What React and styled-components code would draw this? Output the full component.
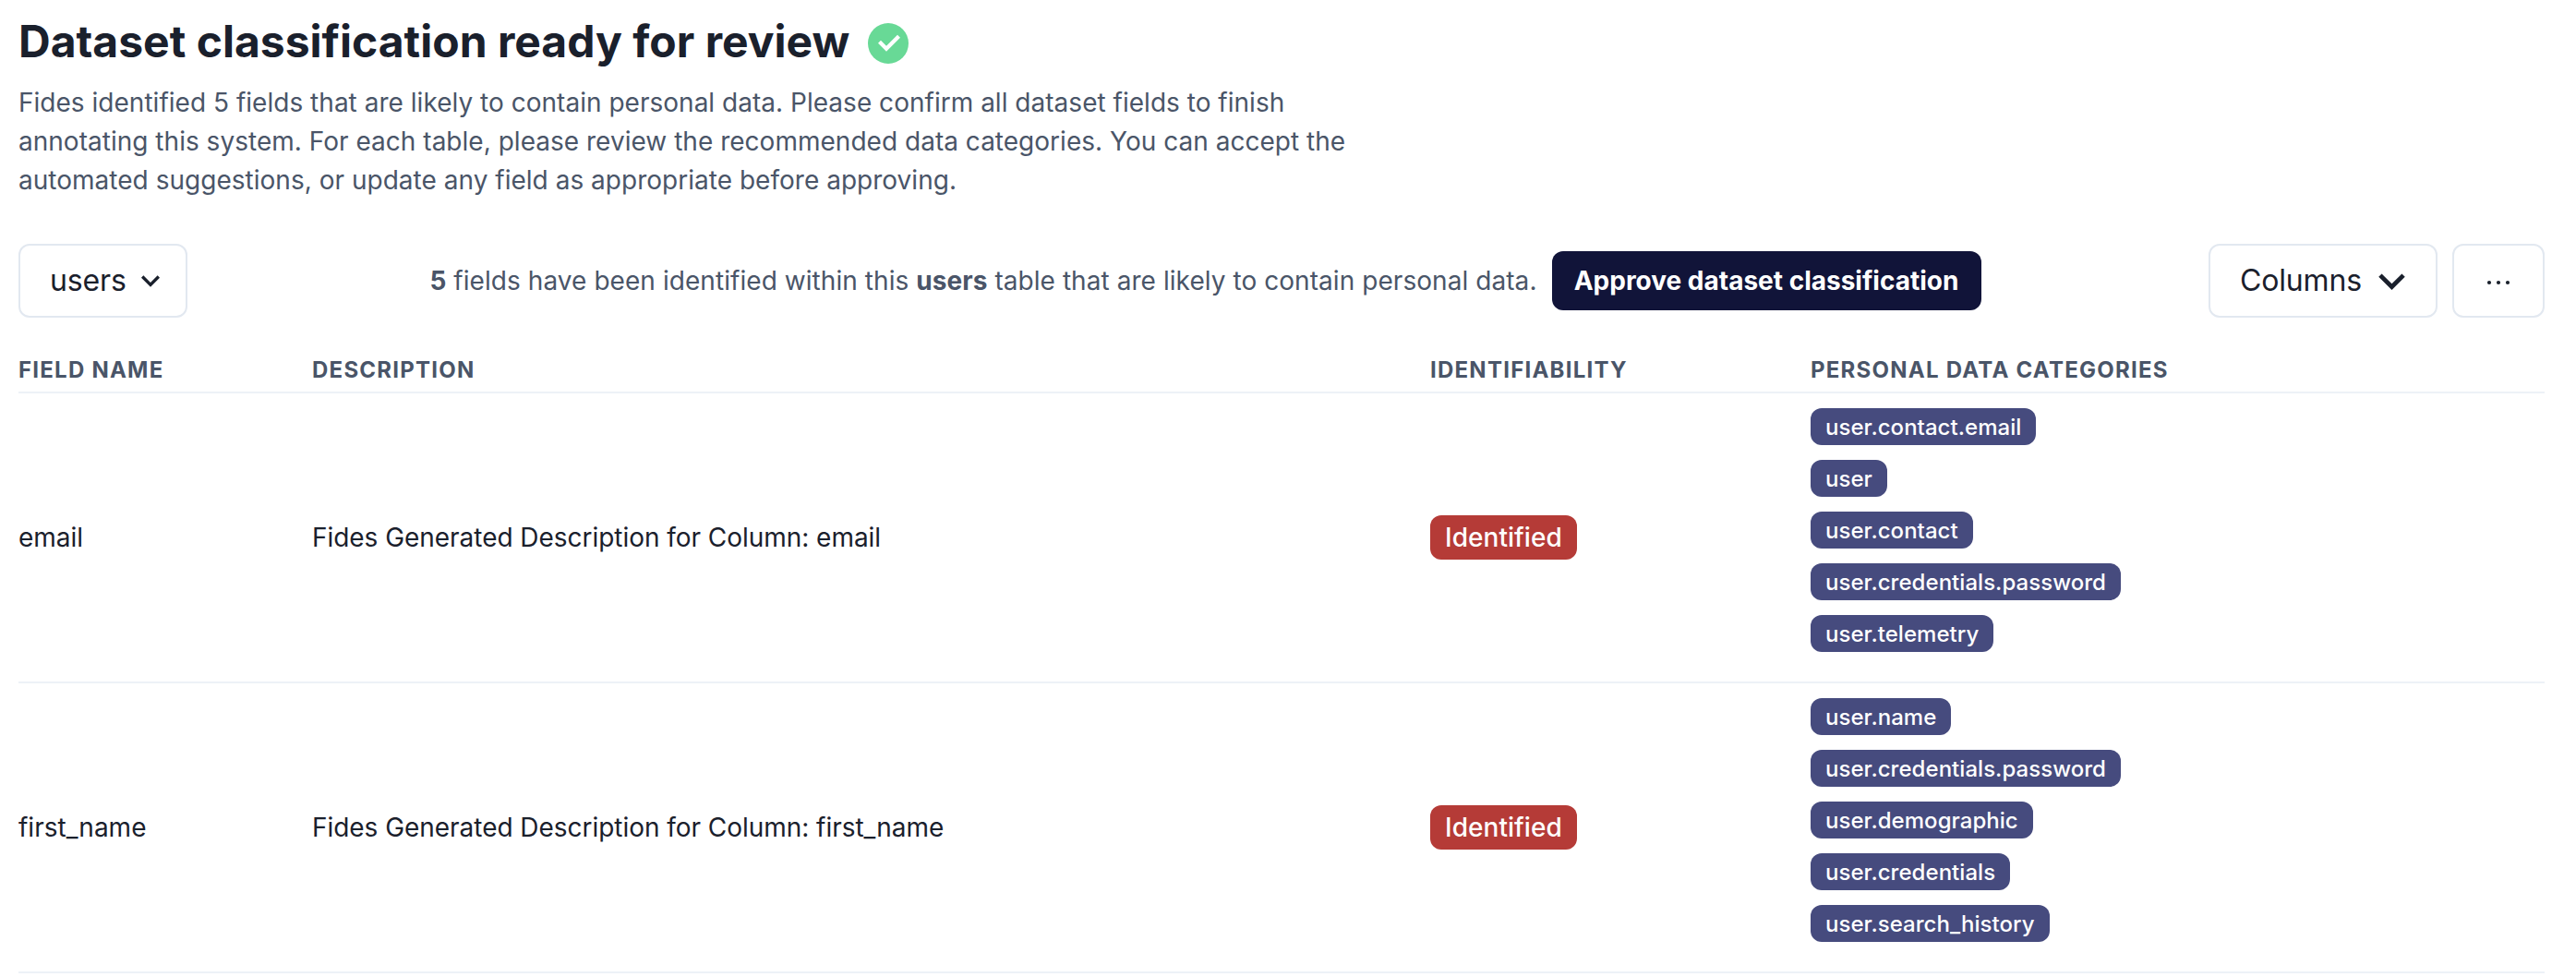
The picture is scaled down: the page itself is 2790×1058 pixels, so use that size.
import React from "react";
import styled, { createGlobalStyle, css } from "styled-components";

const GlobalStyle = createGlobalStyle`
  *, *::before, *::after { box-sizing: border-box; }
  body {
    margin: 0;
    background: #ffffff;
    color: #1a202c;
    font-family: Inter, "Liberation Sans", sans-serif;
    font-size: 28px;
    line-height: 42px;
  }
`;

const Page = styled.main`
  display: flex;
  flex-direction: column;
  width: 2790px;
  height: 1058px;
  padding: 13px 34px 0 20px;
  overflow: hidden;
`;

const TitleRow = styled.div`
  display: flex;
  align-items: center;
  gap: 20px;
  height: 66px;
`;

const Title = styled.h1`
  margin: 0 0 3px;
  font-size: 48px;
  line-height: 64px;
  font-weight: 700;
  white-space: nowrap;
`;

const StatusIcon = styled.svg`
  width: 44px;
  height: 44px;
  margin-top: 2px;
`;

const Intro = styled.p`
  width: 1456px;
  margin: 11px 0 0;
  color: #4a5568;
  letter-spacing: 0.02px;
`;

const Toolbar = styled.div`
  display: flex;
  align-items: center;
  justify-content: space-between;
  height: 80px;
  margin-top: 48px;
`;

const Group = styled.div`
  display: flex;
  align-items: center;
  gap: 16px;
`;

const SummaryGroup = styled(Group)`
  margin-left: 16px;
`;

const OutlineButton = styled.button`
  display: flex;
  align-items: center;
  justify-content: ${(p) => (p.$center ? "center" : "space-between")};
  width: ${(p) => p.$width}px;
  height: 80px;
  padding: 0 ${(p) => p.$padRight || 32}px 0 32px;
  border: 2px solid #e2e8f0;
  border-radius: 12px;
  background: #ffffff;
  color: #1a202c;
  font: 400 32px/48px Inter, "Liberation Sans", sans-serif;
`;

const ButtonLabel = styled.span`
  letter-spacing: -0.15px;
`;

const PrimaryButton = styled.button`
  height: 64px;
  width: 465px;
  padding: 0;
  border: 0;
  border-radius: 12px;
  background: #111439;
  color: #ffffff;
  font: 700 28px/42px Inter, "Liberation Sans", sans-serif;
  white-space: nowrap;
`;

const Summary = styled.span`
  color: #4a5568;
  letter-spacing: 0.06px;
  white-space: nowrap;
  b { font-weight: 700; }
`;

const rowGrid = css`
  display: grid;
  grid-template-columns: 318px 1211px 412px 1fr;
  border-bottom: 2px solid #edf2f7;
`;

const TableHead = styled.div`
  ${rowGrid}
  height: 48px;
  margin-top: 34px;
  color: #4a5568;
  font-size: 24px;
  font-weight: 700;
  line-height: 46px;
  letter-spacing: 1.24px;
  text-transform: uppercase;
`;

const TableRow = styled.div`
  ${rowGrid}
  align-items: center;
  height: 314px;
`;

const Description = styled.span`
  letter-spacing: -0.04px;
`;

const Tags = styled.div`
  display: flex;
  flex-direction: column;
  align-items: flex-start;
  align-self: start;
  gap: 16px;
  padding-top: 16px;
`;

const Tag = styled.span`
  display: inline-flex;
  align-items: center;
  height: ${(p) => (p.$large ? 48 : 40)}px;
  padding: ${(p) => (p.$large ? 0 : 1)}px 16px 0;
  border-radius: 12px;
  background: ${(p) => (p.$large ? "#b53b37" : "#464b7e")};
  color: #ffffff;
  font-size: ${(p) => (p.$large ? 28 : 24)}px;
  font-weight: 500;
  letter-spacing: 0.04px;
`;

const CheckCircle = () => (
  <StatusIcon viewBox="0 0 44 44">
    <circle cx="22" cy="22" r="22" fill="#68d996" />
    <path d="M12.5 20.2 20 27.7 33.5 14.2" fill="none" stroke="#ffffff" strokeWidth="4.2" />
  </StatusIcon>
);

const Chevron = ({ size }) => (
  <svg width={size} height={size} viewBox="0 0 24 24">
    <path fill="currentColor" d="M16.59 8.59 12 13.17 7.41 8.59 6 10l6 6 6-6z" />
  </svg>
);

const Dots = () => (
  <svg width="28" height="28" viewBox="0 0 28 28" fill="currentColor">
    <circle cx="4" cy="16" r="2.1" />
    <circle cx="14" cy="16" r="2.1" />
    <circle cx="24" cy="16" r="2.1" />
  </svg>
);

const rows = [
  {
    name: "email",
    tags: ["user.contact.email", "user", "user.contact", "user.credentials.password", "user.telemetry"],
  },
  {
    name: "first_name",
    tags: ["user.name", "user.credentials.password", "user.demographic", "user.credentials", "user.search_history"],
  },
];

export default function App() {
  return (
    <>
      <GlobalStyle />
      <Page>
        <TitleRow>
          <Title>Dataset classification ready for review</Title>
          <CheckCircle />
        </TitleRow>
        <Intro>
          Fides identified 5 fields that are likely to contain personal data. Please confirm all dataset fields to
          finish annotating this system. For each table, please review the recommended data categories. You can accept
          the automated suggestions, or update any field as appropriate before approving.
        </Intro>
        <Toolbar>
          <OutlineButton $width={183} $padRight={18}>
            <ButtonLabel>users</ButtonLabel>
            <Chevron size={40} />
          </OutlineButton>
          <SummaryGroup>
            <Summary>
              <b>5</b> fields have been identified within this <b>users</b> table that are likely to contain personal
              data.
            </Summary>
            <PrimaryButton>Approve dataset classification</PrimaryButton>
          </SummaryGroup>
          <Group>
            <OutlineButton $width={248} $padRight={19}>
              <ButtonLabel>Columns</ButtonLabel>
              <Chevron size={57} />
            </OutlineButton>
            <OutlineButton $width={100} $center aria-label="More">
              <Dots />
            </OutlineButton>
          </Group>
        </Toolbar>
        <TableHead>
          <span>Field Name</span>
          <span>Description</span>
          <span>Identifiability</span>
          <span>Personal Data Categories</span>
        </TableHead>
        {rows.map((row) => (
          <TableRow key={row.name}>
            <span>{row.name}</span>
            <Description>Fides Generated Description for Column: {row.name}</Description>
            <div>
              <Tag $large>Identified</Tag>
            </div>
            <Tags>
              {row.tags.map((tag) => (
                <Tag key={tag}>{tag}</Tag>
              ))}
            </Tags>
          </TableRow>
        ))}
      </Page>
    </>
  );
}
